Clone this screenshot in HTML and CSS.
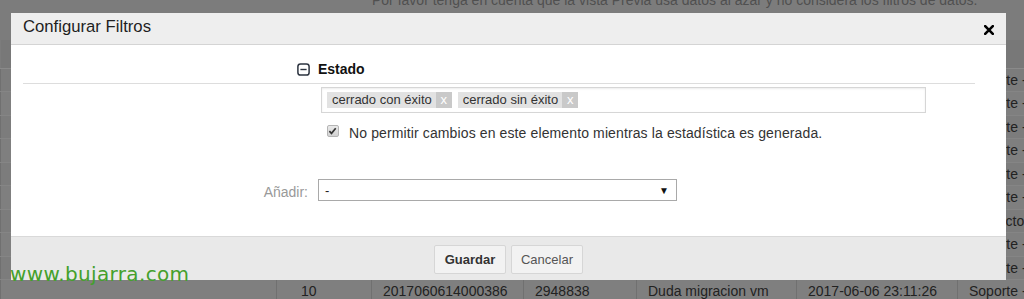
FILE: index.html
```html
<!DOCTYPE html>
<html lang="es">
<head>
<meta charset="utf-8">
<title>Configurar Filtros</title>
<link rel="stylesheet" href="styles.css">
</head>
<body>
<div class="page">
  <p class="notice">Por favor tenga en cuenta que la vista Previa usa datos al azar y no considera los filtros de datos.</p>
  <table class="grid">
    <colgroup>
      <col class="c0"><col class="c1"><col class="c2"><col class="c3"><col class="c4"><col class="c5"><col class="c6">
    </colgroup>
    <thead>
      <tr><th></th><th></th><th></th><th></th><th></th><th></th><th></th></tr>
    </thead>
    <tbody>
      <tr><td></td><td class="first">1</td><td>2017060614000377</td><td>2948829</td><td>Consulta</td><td>2017-06-06 20:11:26</td><td>Soporte -</td></tr>
      <tr><td></td><td class="first">2</td><td>2017060614000378</td><td>2948830</td><td>Consulta</td><td>2017-06-06 20:31:26</td><td>Soporte -</td></tr>
      <tr><td></td><td class="first">3</td><td>2017060614000379</td><td>2948831</td><td>Consulta</td><td>2017-06-06 20:51:26</td><td>Soporte -</td></tr>
      <tr><td></td><td class="first">4</td><td>2017060614000380</td><td>2948832</td><td>Consulta</td><td>2017-06-06 21:11:26</td><td>Soporte -</td></tr>
      <tr><td></td><td class="first">5</td><td>2017060614000381</td><td>2948833</td><td>Consulta</td><td>2017-06-06 21:31:26</td><td>Soporte -</td></tr>
      <tr><td></td><td class="first">6</td><td>2017060614000382</td><td>2948834</td><td>Consulta</td><td>2017-06-06 21:51:26</td><td>Soporte -</td></tr>
      <tr><td></td><td class="first">7</td><td>2017060614000383</td><td>2948835</td><td>Consulta</td><td>2017-06-06 22:11:26</td><td>Proyecto -</td></tr>
      <tr><td></td><td class="first">8</td><td>2017060614000384</td><td>2948836</td><td>Consulta</td><td>2017-06-06 22:31:26</td><td>Soporte -</td></tr>
      <tr><td></td><td class="first">9</td><td>2017060614000385</td><td>2948837</td><td>Consulta</td><td>2017-06-06 22:51:26</td><td>Soporte -</td></tr>
      <tr><td></td><td class="first">10</td><td>2017060614000386</td><td>2948838</td><td>Duda migracion vm</td><td>2017-06-06 23:11:26</td><td>Soporte -</td></tr>
    </tbody>
  </table>
</div>

<div class="dialog">
  <div class="dlg-head">
    <span class="dlg-title">Configurar Filtros</span>
    <svg class="dlg-close" width="10" height="10" viewBox="0 0 10 10"><path d="M1.2 1.2 L8.8 8.8 M8.8 1.2 L1.2 8.8" stroke="#000" stroke-width="2.6" stroke-linecap="square"/></svg>
  </div>
  <div class="dlg-body">
    <div class="section-head">
      <svg class="toggle" width="13" height="13" viewBox="0 0 13 13"><rect x="0.9" y="0.9" width="11.2" height="11.2" rx="2.6" fill="#fff" stroke="#2d3440" stroke-width="1.5"/><path d="M3.4 6.5 H9.6" stroke="#2d3440" stroke-width="1.4"/></svg>
      <span class="section-title">Estado</span>
    </div>
    <div class="form">
      <div class="lbl"></div>
      <div class="tagbox">
        <span class="tag"><span class="tag-text">cerrado con éxito</span><span class="tag-x">x</span></span>
        <span class="tag"><span class="tag-text">cerrado sin éxito</span><span class="tag-x">x</span></span>
      </div>
      <div class="lbl"></div>
      <div class="check-row">
        <span class="check"><svg width="12" height="12" viewBox="0 0 12 12"><path d="M2.6 6.2 L4.9 8.6 L9.5 3" fill="none" stroke="#333" stroke-width="1.8"/></svg></span>
        <span class="check-label">No permitir cambios en este elemento mientras la estadística es generada.</span>
      </div>
      <div class="lbl add-lbl">Añadir:</div>
      <div class="select"><span class="sel-val">-</span><span class="sel-arrow">▼</span></div>
    </div>
  </div>
  <div class="dlg-foot">
    <button class="btn btn-primary">Guardar</button>
    <button class="btn">Cancelar</button>
  </div>
</div>

<div class="watermark">www.bujarra.com</div>
</body>
</html>
```

FILE: styles.css
```css
* { box-sizing: border-box; }
html, body { margin: 0; padding: 0; }
body {
  width: 1024px;
  height: 299px;
  overflow: hidden;
  background: #7c7c7c;
  font-family: "Liberation Sans", Arial, sans-serif;
  position: relative;
}

/* background page (dimmed) */
.page { color: #262626; }
.notice {
  margin: -8px 0 0 0;
  padding-left: 372px;
  font-size: 14px;
  line-height: 16px;
  white-space: nowrap;
  color: #505050;
}
.grid {
  margin-top: 32px;
  border-collapse: collapse;
  table-layout: fixed;
  width: 1160px;
  font-size: 14px;
}
.c0 { width: 276px; }
.c1 { width: 95px; }
.c2 { width: 152px; }
.c3 { width: 113px; }
.c4 { width: 160px; }
.c5 { width: 161px; }
.c6 { width: 203px; }
.grid th { height: 28px; background: #787878; border-bottom: 1px solid #8a8a8a; }
.grid td {
  height: 23.5px;
  padding: 0 0 0 11px;
  border-left: 1px solid #707070;
  border-bottom: 1px solid #858585;
  white-space: nowrap;
  overflow: hidden;
  color: #222;
}
.grid td.first { padding-left: 24px; }
.grid tbody tr:nth-child(even) td { background: #7f7f7f; }

/* dialog */
.dialog {
  position: absolute;
  left: 11px;
  top: 13px;
  width: 995px;
  height: 267px;
  background: #fff;
  display: flex;
  flex-direction: column;
}
.dlg-head {
  height: 32px;
  background: #eeeeee;
  border-bottom: 1px solid #d4d4d4;
  display: flex;
  align-items: flex-start;
  justify-content: space-between;
  padding: 4px 12px 0 12px;
}
.dlg-title {
  font-size: 16.7px;
  line-height: 20px;
  color: #1e1e1e;
}
.dlg-close { margin-top: 8px; }

.dlg-body {
  height: 191px;
  padding: 14px 31px 0 12px;
}
.section-head {
  display: flex;
  align-items: center;
  gap: 8px;
  padding: 0 0 4px 274px;
  border-bottom: 1px solid #dddddd;
}
.toggle { display: block; margin-top: 1px; }
.section-title {
  font-size: 14px;
  font-weight: bold;
  line-height: 20px;
  color: #111;
}

.form {
  display: grid;
  grid-template-columns: 285px 1fr;
  column-gap: 10px;
  align-items: start;
}
.lbl { text-align: right; }
.tagbox {
  margin: 3px 0 0 3px;
  width: 605px;
  height: 26px;
  border: 1px solid #d6d6d6;
  box-shadow: inset 0 1px 2px rgba(0,0,0,0.08);
  display: flex;
  align-items: center;
  gap: 6px;
  padding: 0 5px;
}
.tag {
  display: inline-flex;
  height: 16px;
  background: #e2e2e2;
  font-size: 13px;
  line-height: 16px;
  color: #333;
}
.tag-text { padding: 0 4px 0 5px; }
.tag-x {
  width: 16px;
  text-align: center;
  background: #c9c9c9;
  color: #fff;
}
.check-row {
  margin: 11px 0 0 9px;
  display: flex;
  align-items: flex-start;
  gap: 10px;
}
.check {
  width: 12px;
  height: 12px;
  margin-top: 1px;
  border: 1px solid #b5b5b5;
  border-radius: 2px;
  background: linear-gradient(#eaeaea, #d2d2d2);
  display: flex;
}
.check svg { margin: -1px 0 0 -1px; }
.check-label {
  font-size: 14px;
  line-height: 18px;
  letter-spacing: 0.12px;
  color: #333;
}
.add-lbl {
  margin-top: 37px;
  font-size: 14px;
  line-height: 22px;
  padding-top: 2px;
  color: #999;
}
.select {
  margin-top: 37px;
  width: 359px;
  height: 22px;
  border: 1px solid #a9a9a9;
  display: flex;
  align-items: center;
  justify-content: space-between;
  padding: 0 7px 0 6px;
  font-size: 13px;
  color: #222;
}
.sel-arrow { font-size: 10px; color: #111; }

.dlg-foot {
  flex: 1;
  background: #e9e9e9;
  border-top: 1px solid #d9d9d9;
  display: flex;
  justify-content: center;
  align-items: flex-start;
  gap: 5px;
  padding-top: 8px;
}
.btn {
  height: 29px;
  width: 72px;
  padding: 0;
  background: #f2f2f2;
  border: 1px solid #d6d6d6;
  border-radius: 2px;
  font-family: "Liberation Sans", Arial, sans-serif;
  font-size: 13px;
  color: #555;
}
.btn-primary { font-weight: bold; color: #333; }

.watermark {
  position: absolute;
  left: 10px;
  top: 262px;
  font-family: "DejaVu Sans", sans-serif;
  font-size: 20px;
  line-height: 24px;
  letter-spacing: 0.35px;
  color: #44a02c;
  white-space: nowrap;
}
```
